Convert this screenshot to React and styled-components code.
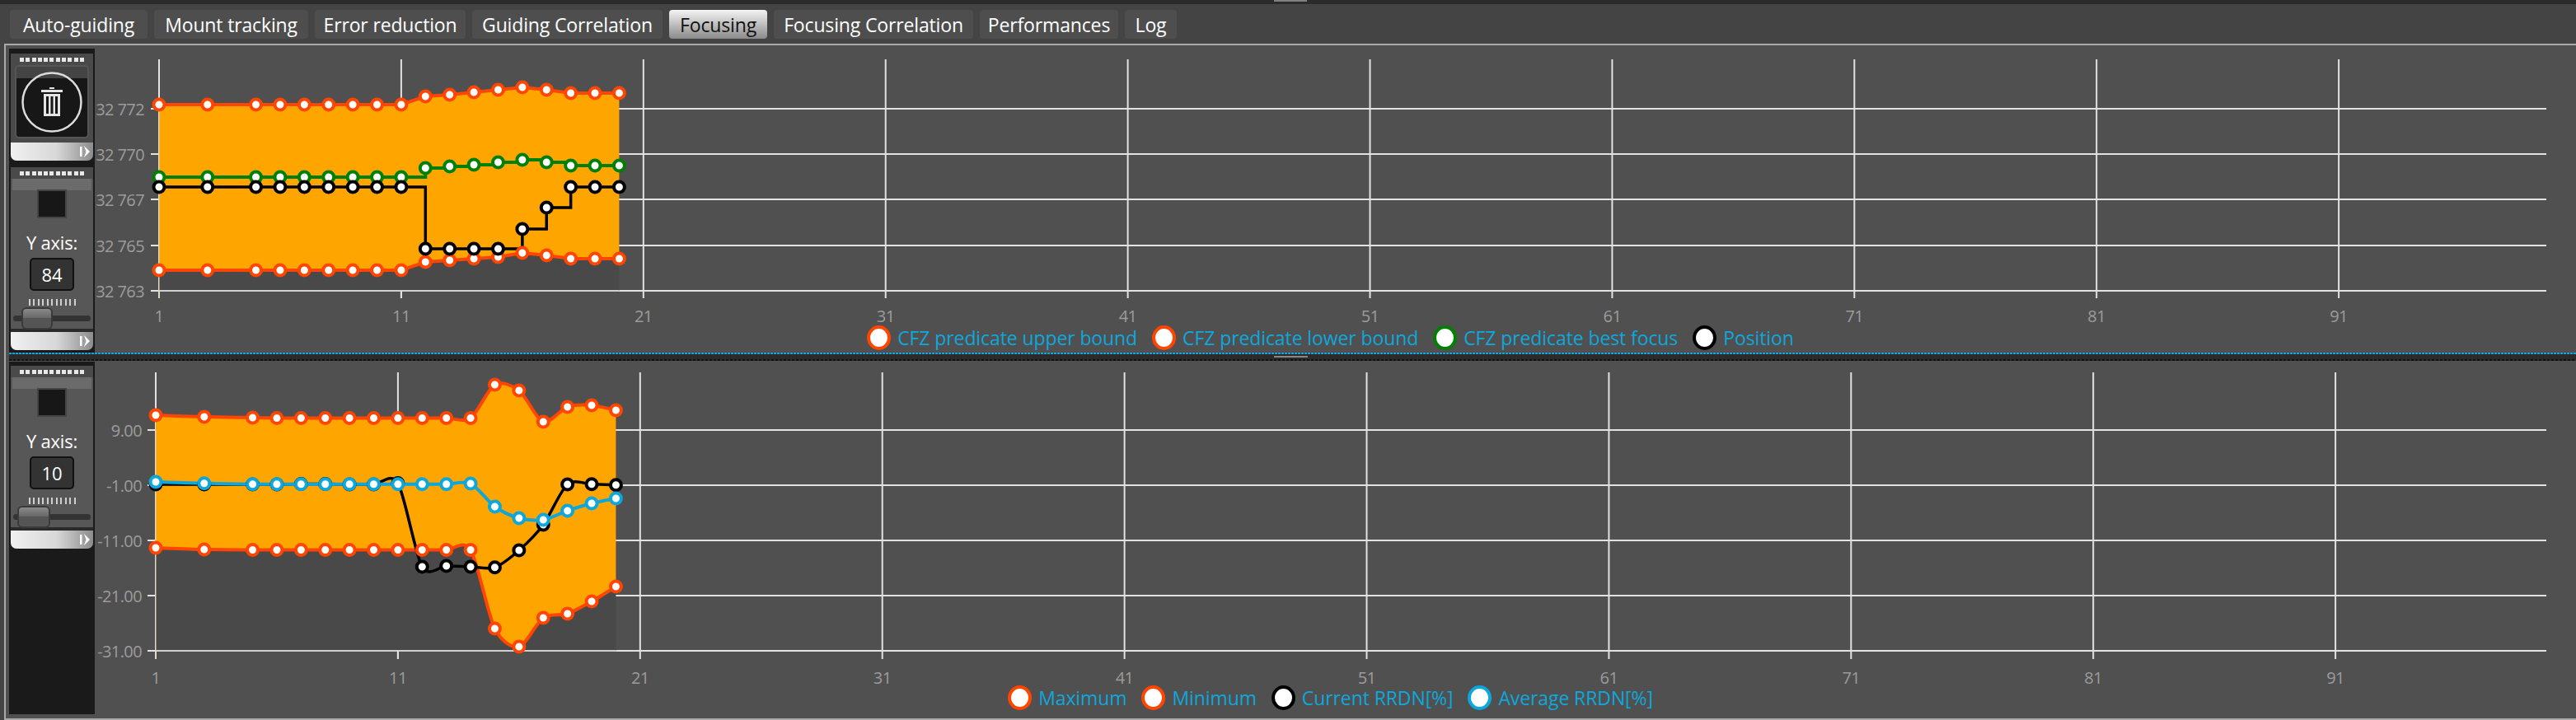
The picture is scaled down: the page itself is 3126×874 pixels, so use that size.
import React from 'react'
import styled, { createGlobalStyle } from 'styled-components'

const GlobalStyle = createGlobalStyle`
  html, body { margin: 0; padding: 0; background: #444; overflow: hidden; }
  body { font-family: "Open Sans", "Liberation Sans", sans-serif; }
`

const Page = styled.div`
  width: 3126px;
  height: 874px;
  display: flex;
  flex-direction: column;
  background: #444;
`
const TopStrip = styled.div`
  height: 5px;
  background: #2b2b2b;
  display: flex;
  justify-content: center;
  padding-left: 6px;
`
const Handle = styled.div`
  width: 40px;
  height: 2px;
  background: #808080;
`
const TabBar = styled.div`
  height: 48px;
  box-sizing: border-box;
  padding: 7px 0 0 12px;
  display: flex;
  gap: 8px;
  align-items: flex-start;
  background: #444;
`
const Tab = styled.div`
  width: ${p => p.$w}px;
  height: 35px;
  box-sizing: border-box;
  display: flex;
  align-items: center;
  justify-content: center;
  border-radius: 4px;
  font-size: 23px;
  letter-spacing: -0.15px;
  white-space: nowrap;
  color: ${p => (p.$active ? '#111' : '#fff')};
  background: ${p => (p.$active ? 'linear-gradient(#f4f4f4, #8a8a8a)' : '#4e4e4e')};
`
const Shell = styled.div`
  flex: 1;
  margin-left: 5px;
  display: flex;
  flex-direction: column;
  background: #505050;
  border-top: 2px solid #aaa;
  border-left: 2px solid #aaa;
  border-bottom: 2px solid #aaa;
  min-height: 0;
`
const Pane = styled.div`
  height: ${p => p.$h}px;
  display: flex;
`
const Sidebar = styled.div`
  width: 104px;
  margin: ${p => p.$top}px 0 ${p => p.$bottom}px 4px;
  padding: ${p => p.$pad}px 2px 0;
  box-sizing: border-box;
  background: #1a1a1a;
  display: flex;
  flex-direction: column;
  gap: 8px;
`
const Plot = styled.div`
  flex: 1;
  min-width: 0;
  display: flex;
  flex-direction: column;
`
const Card = styled.div`
  display: flex;
  flex-direction: column;
  background: #2b2b2b;
  border-radius: 0 0 8px 8px;
`
const CardBody = styled.div`
  display: flex;
  flex-direction: column;
  align-items: center;
  height: ${p => p.$h}px;
  background: #575757;
`
const Grip = styled.div`
  height: 14px;
  background: #4a4a4a;
  display: flex;
  justify-content: center;
  align-items: center;
  flex: none;
  width: 100%;
  &::before {
    content: '';
    width: 79px;
    height: 5px;
    background: repeating-linear-gradient(90deg, #e8e8e8 0 5px, transparent 5px 7.3px);
  }
`
const TrashBox = styled.div`
  width: 90px;
  height: 89px;
  box-sizing: border-box;
  border-radius: 5px;
  border: 2px solid #555;
  background: linear-gradient(#444 0 14px, #171717 14px);
  display: flex;
  align-items: center;
  justify-content: center;
`
const TrashBody = styled(CardBody)`
  background: #4a4a4a;
`
const Band = styled.div`
  width: 96px;
  height: 14px;
  background: #6b6b6b;
  flex: none;
`
const Square = styled.div`
  width: 32px;
  height: 31px;
  margin-top: -1px;
  flex: none;
  background: #171717;
  border: 2px solid #444;
`
const AxisTitle = styled.div`
  margin-top: 14px;
  height: 30px;
  line-height: 30px;
  font-size: 22px;
  letter-spacing: -0.2px;
  color: #fff;
`
const ValueBox = styled.div`
  margin-top: 4px;
  width: 54px;
  height: 40px;
  box-sizing: border-box;
  flex: none;
  display: flex;
  align-items: center;
  justify-content: center;
  border: 2px solid #111;
  border-radius: 5px;
  background: #333;
  color: #fff;
  font-size: 22px;
`
const Ticks = styled.div`
  margin-top: 10px;
  width: 57px;
  height: 8px;
  flex: none;
  background: repeating-linear-gradient(90deg, #cfcfcf 0 2px, transparent 2px 5.5px);
`
const Slider = styled.div`
  position: relative;
  margin-top: 2px;
  width: 94px;
  height: 26px;
  flex: none;
  display: flex;
  align-items: center;
  &::before {
    content: '';
    width: 100%;
    height: 7px;
    border-radius: 4px;
    background: #333;
  }
`
const Thumb = styled.div`
  position: absolute;
  left: ${p => p.$left}px;
  top: 0;
  width: ${p => p.$w}px;
  height: 27px;
  box-sizing: border-box;
  border: 2px solid #3a3a3a;
  border-radius: 6px;
  background: linear-gradient(#8a8a8a, #6a6a6a 45%, #555 50%, #555);
`
const Footer = styled.div`
  margin-top: ${p => p.$gap}px;
  height: 22px;
  flex: none;
  border-radius: 0 0 7px 7px;
  background: linear-gradient(90deg, #f0f0f0, #d8d8d8 55%, #8c8c8c);
  display: flex;
  align-items: center;
  justify-content: flex-end;
  padding-right: 4px;
`
const Divider = styled.div`
  height: 10px;
  margin-left: 4px;
  flex: none;
  display: flex;
  justify-content: center;
  align-items: center;
  background:
    repeating-linear-gradient(90deg, #0ea7dc 0 3px, #2b2b2b 3px 4px) top / 100% 2px no-repeat,
    repeating-linear-gradient(90deg, #111 0 3px, #2b2b2b 3px 5px) bottom / 100% 2px no-repeat,
    #2b2b2b;
`
const DividerGrip = styled.div`
  width: 41px;
  height: 2px;
  margin-right: 4px;
  background: #888;
`
const ChartSvg = styled.svg`
  display: block;
  flex: none;
`
const AxisLabel = styled.text`
  font-family: "Open Sans", "Liberation Sans", sans-serif;
  font-size: 20px;
  letter-spacing: -0.6px;
  fill: #9c9c9c;
`
const Legend = styled.div`
  height: ${p => p.$h}px;
  flex: none;
  display: flex;
  align-items: center;
  justify-content: center;
  gap: 18px;
  padding-right: ${p => p.$shift}px;
`
const LegendItem = styled.div`
  display: flex;
  align-items: center;
  gap: 8px;
  color: #0ea7dc;
  font-size: 23px;
  line-height: 24px;
  letter-spacing: -0.1px;
  white-space: nowrap;
`
const LegendDot = styled.span`
  width: 21px;
  height: 22px;
  flex: none;
  border: 4px solid ${p => p.$color};
  border-radius: 50%;
  background: #fff;
`

const TABS = [
  ['Auto-guiding', 167],
  ['Mount tracking', 187],
  ['Error reduction', 183],
  ['Guiding Correlation', 231],
  ['Focusing', 119, true],
  ['Focusing Correlation', 242],
  ['Performances', 168],
  ['Log', 63],
]

const ORANGE = '#ff4500'
const GREEN = '#008000'
const BLACK = '#000'
const BLUE = '#0ea7dc'

// the run has no sample for 2 and 4, the axis does
const INDEXES = [1, 3, 5, 6, 7, 8, 9, 10, 11, 12, 13, 14, 15, 16, 17, 18, 19, 20]
const STEP = 29.39

const linePath = (pts, mode, move = 'M') => {
  let d = `${move}${pts[0][0]} ${pts[0][1]}`
  for (let i = 1; i < pts.length; i++) {
    const [x, y] = pts[i]
    const [px, py] = pts[i - 1]
    if (mode === 'step') {
      d += `L${x} ${py}L${x} ${y}`
    } else if (mode === 'smooth') {
      const a = pts[i - 2] || pts[i - 1]
      const b = pts[i + 1] || pts[i]
      const t = 0.14
      d += `C${px + (x - a[0]) * t} ${py + (y - a[1]) * t} ${x - (b[0] - px) * t} ${y - (b[1] - py) * t} ${x} ${y}`
    } else {
      d += `L${x} ${y}`
    }
  }
  return d
}

const focusChart = {
  x0: 193,
  viewTop: 55,
  height: 343,
  top: 72,
  axisY: 353,
  tickEnd: 362,
  labelX: 175,
  labelY: 383,
  rows: [[132, '32 772'], [187, '32 770'], [242, '32 767'], [298, '32 765'], [353, '32 763']],
  upper: [127, 127, 127, 127, 127, 127, 127, 127, 127, 117, 115, 112, 109, 106, 109, 113, 113, 113],
  lower: [328, 328, 328, 328, 328, 328, 328, 328, 328, 318, 316, 314, 312, 307, 310, 314, 314, 314],
  mode: 'line',
  extra: [
    { color: GREEN, mode: 'step', ys: [215, 215, 215, 215, 215, 215, 215, 215, 215, 204, 202, 200, 197, 194, 197, 201, 201, 201] },
    { color: BLACK, mode: 'step', thin: true, ys: [227, 227, 227, 227, 227, 227, 227, 227, 227, 302, 302, 302, 302, 278, 252, 227, 227, 227] },
  ],
}

const rrdnChart = {
  x0: 189,
  viewTop: 438,
  height: 398,
  top: 452,
  axisY: 790,
  tickEnd: 800,
  labelX: 172,
  labelY: 822,
  rows: [[522, '9.00'], [589, '-1.00'], [656, '-11.00'], [723, '-21.00'], [790, '-31.00']],
  upper: [504, 506, 507, 507.5, 507.5, 507.5, 507.5, 507.5, 507.5, 507.5, 507.5, 507.5, 467, 474, 512, 494, 492, 498],
  lower: [665, 667, 667.5, 667.5, 667.5, 667.5, 667.5, 667.5, 667.5, 667.5, 667.5, 667.5, 763, 785, 750, 745, 730, 712],
  mode: 'smooth',
  extra: [
    { color: BLACK, mode: 'smooth', thin: true, ys: [588, 588, 588, 588, 587.5, 587.5, 588, 588, 586.5, 688, 687, 688, 688.7, 668, 637, 588, 587.7, 588.7] },
    { color: BLUE, mode: 'smooth', ys: [585, 586.7, 587.7, 587.7, 587.7, 587.7, 587.7, 587.7, 587.7, 587.7, 587.7, 587, 615, 629, 631, 620, 611, 605] },
  ],
}

function Chart({ x0, viewTop, height, top, axisY, tickEnd, labelX, labelY, rows, upper, lower, mode, extra }) {
  const xAt = i => x0 + (i - 1) * STEP
  const pts = ys => ys.map((y, k) => [xAt(INDEXES[k]), y])
  const up = pts(upper)
  const low = pts(lower)
  const xEnd = xAt(20)
  const bands = `${linePath(up, mode)}${linePath([...low].reverse(), mode, 'L')}Z`
  const under = `${linePath(low, mode)}L${xEnd} ${axisY}L${x0} ${axisY}Z`
  const series = [
    { color: ORANGE, mode, ys: upper },
    { color: ORANGE, mode, ys: lower },
    ...extra,
  ]
  const columns = Array.from({ length: 10 }, (_, k) => k * 10 + 1)

  return (
    <ChartSvg width="3011" height={height} viewBox={`115 ${viewTop} 3011 ${height}`}>
      {rows.map(([y]) => (
        <line key={y} x1={x0 - 10} x2="3090" y1={y} y2={y} stroke="#e2e2e2" strokeWidth="2" />
      ))}
      {columns.map(n => (
        <line key={n} x1={xAt(n)} x2={xAt(n)} y1={top} y2={tickEnd} stroke="#e2e2e2" strokeWidth="2" />
      ))}
      <path d={under} fill="#494949" />
      <path d={bands} fill="#ffa500" />
      <line x1={x0} x2={xEnd} y1={axisY} y2={axisY} stroke="#d0d0d0" strokeWidth="2" />
      <line x1={xAt(11)} x2={xAt(11)} y1={axisY} y2={tickEnd} stroke="#e2e2e2" strokeWidth="2" />
      <line x1={x0} x2={x0} y1={rows[0][0]} y2={tickEnd} stroke="#e2d2b0" strokeWidth="1" />
      {series.map((s, k) => (
        <path
          key={k}
          d={linePath(pts(s.ys), s.mode)}
          fill="none"
          stroke={s.color}
          strokeWidth={s.thin ? 3.5 : 4}
          strokeLinejoin="miter"
        />
      ))}
      {series.map((s, k) =>
        pts(s.ys).map(([x, y]) => (
          <circle key={`${k}-${x}`} cx={x} cy={y} r="6.5" fill="#fff" stroke={s.color} strokeWidth="4" />
        ))
      )}
      {rows.map(([y, label]) => (
        <AxisLabel key={label} x={labelX} y={y} textAnchor="end" dominantBaseline="central">
          {label}
        </AxisLabel>
      ))}
      {columns.map(n => (
        <AxisLabel key={n} x={xAt(n)} y={labelY} textAnchor="middle" dominantBaseline="central">
          {n}
        </AxisLabel>
      ))}
    </ChartSvg>
  )
}

const TrashIcon = () => (
  <svg width="76" height="76" viewBox="0 0 76 76">
    <circle cx="38" cy="38" r="35.5" fill="none" stroke="#dcdcdc" strokeWidth="2.5" />
    <path d="M35 20h6v2h-6z M25 23h26v3H25z" fill="#e4e4e4" />
    <path
      fillRule="evenodd"
      d="M28 28h20v27H28z M31 31v21h3V31z M36.5 31v21h3V31z M42 31v21h3V31z"
      fill="#e4e4e4"
    />
  </svg>
)

const FooterGlyph = () => (
  <svg width="12" height="14" viewBox="0 0 12 14">
    <path d="M0 1h2.5v12H0z M5 0l7 7-7 7 2.5-7z" fill="#fff" />
  </svg>
)

const Footbar = ({ gap }) => (
  <Footer $gap={gap}>
    <FooterGlyph />
  </Footer>
)

function AxisWidget({ value, thumbLeft, thumbWidth }) {
  return (
    <Card>
      <Grip />
      <CardBody $h={182}>
        <Band />
        <Square />
        <AxisTitle>Y axis:</AxisTitle>
        <ValueBox>{value}</ValueBox>
        <Ticks />
        <Slider>
          <Thumb $left={thumbLeft} $w={thumbWidth} />
        </Slider>
      </CardBody>
      <Footbar gap={4} />
    </Card>
  )
}

const LegendRow = ({ items, shift, height }) => (
  <Legend $shift={shift} $h={height}>
    {items.map(([label, color]) => (
      <LegendItem key={label}>
        <LegendDot $color={color} />
        {label}
      </LegendItem>
    ))}
  </Legend>
)

export default function App() {
  return (
    <Page>
      <GlobalStyle />
      <TopStrip>
        <Handle />
      </TopStrip>
      <TabBar>
        {TABS.map(([label, w, active]) => (
          <Tab key={label} $w={w} $active={active}>
            {label}
          </Tab>
        ))}
      </TabBar>
      <Shell>
        <Pane $h={373}>
          <Sidebar $top={4} $bottom={0} $pad={6}>
            <Card>
              <Grip />
              <TrashBody $h={94}>
                <TrashBox>
                  <TrashIcon />
                </TrashBox>
              </TrashBody>
              <Footbar gap={0} />
            </Card>
            <AxisWidget value="84" thumbLeft={10} thumbWidth={38} />
          </Sidebar>
          <Plot>
            <Chart {...focusChart} />
            <LegendRow
              shift={12}
              height={24}
              items={[
                ['CFZ predicate upper bound', ORANGE],
                ['CFZ predicate lower bound', ORANGE],
                ['CFZ predicate best focus', GREEN],
                ['Position', BLACK],
              ]}
            />
          </Plot>
        </Pane>
        <Divider>
          <DividerGrip />
        </Divider>
        <Pane $h={434}>
          <Sidebar $top={1} $bottom={5} $pad={5}>
            <AxisWidget value="10" thumbLeft={5} thumbWidth={40} />
          </Sidebar>
          <Plot>
            <Chart {...rrdnChart} />
            <LegendRow
              shift={12}
              height={22}
              items={[
                ['Maximum', ORANGE],
                ['Minimum', ORANGE],
                ['Current RRDN[%]', BLACK],
                ['Average RRDN[%]', BLUE],
              ]}
            />
          </Plot>
        </Pane>
      </Shell>
    </Page>
  )
}
